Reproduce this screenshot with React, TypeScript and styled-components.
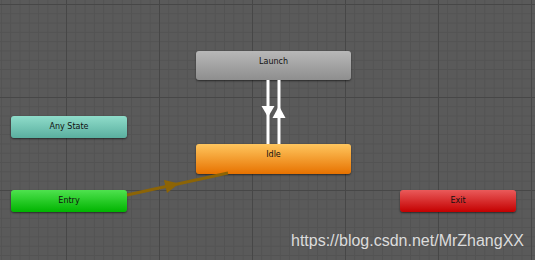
import styled, { createGlobalStyle, css } from "styled-components";

const GlobalStyle = createGlobalStyle`
  html, body {
    margin: 0;
    padding: 0;
    background: #585858;
  }
`;

type Kind = "plain" | "default" | "any" | "entry" | "exit";

const kinds = {
  plain: css`
    background: linear-gradient(#b8b8b8, #8e8e8e);
  `,
  default: css`
    background: linear-gradient(#ffc65e, #e77200);
  `,
  any: css`
    background: linear-gradient(#8fdcca, #5aaf9f);
  `,
  entry: css`
    background: linear-gradient(#4ee24e, #00b400);
  `,
  exit: css`
    background: linear-gradient(#ea5a5a, #c40000);
  `,
};

const Canvas = styled.div`
  position: relative;
  width: 535px;
  height: 260px;
  overflow: hidden;
  background-color: #5a5a5a;
  background-image:
    linear-gradient(90deg, #474747 1px, transparent 1px),
    linear-gradient(#474747 1px, transparent 1px),
    linear-gradient(90deg, #535353 1px, transparent 1px),
    linear-gradient(#535353 1px, transparent 1px);
  background-size: 93px 93px, 93px 93px, 9.3px 9.3px, 9.3px 9.3px;
  background-position: 66px 4px, 66px 4px, 66px 4px, 66px 4px;
  font-family: "DejaVu Sans", Verdana, sans-serif;
`;

const StateNode = styled.div<{ $kind: Kind; $x: number; $y: number; $w: number; $h: number }>`
  position: absolute;
  left: ${(p) => p.$x}px;
  top: ${(p) => p.$y}px;
  width: ${(p) => p.$w}px;
  height: ${(p) => p.$h}px;
  box-sizing: border-box;
  border-radius: 3px;
  box-shadow: 0 1px 2px rgba(0, 0, 0, 0.55);
  color: #111;
  font-size: 8px;
  line-height: 22px;
  text-align: center;
  ${(p) => kinds[p.$kind]}
`;

const Links = styled.svg`
  position: absolute;
  left: 0;
  top: 0;
  pointer-events: none;
`;

const Watermark = styled.div`
  position: absolute;
  right: 11px;
  bottom: 10px;
  color: #dcdcdc;
  font-family: "Liberation Sans", Arial, sans-serif;
  font-size: 16px;
`;

const states: { name: string; kind: Kind; x: number; y: number; w: number; h: number }[] = [
  { name: "Launch", kind: "plain", x: 196, y: 51, w: 155, h: 29 },
  { name: "Idle", kind: "default", x: 196, y: 144, w: 155, h: 30 },
  { name: "Any State", kind: "any", x: 11, y: 116, w: 116, h: 22 },
  { name: "Entry", kind: "entry", x: 11, y: 190, w: 116, h: 22 },
  { name: "Exit", kind: "exit", x: 400, y: 190, w: 116, h: 22 },
];

export default function App() {
  return (
    <>
      <GlobalStyle />
      <Canvas>
        {states.map((s) => (
          <StateNode key={s.name} $kind={s.kind} $x={s.x} $y={s.y} $w={s.w} $h={s.h}>
            {s.name}
          </StateNode>
        ))}
        <Links width="535" height="260">
          {/* Launch <-> Idle */}
          <line x1="268" y1="80" x2="268" y2="144" stroke="#fff" strokeWidth="3" />
          <polygon points="261.5,106 274.5,106 268,117" fill="#fff" />
          <line x1="279" y1="80" x2="279" y2="144" stroke="#fff" strokeWidth="3" />
          <polygon points="279,106 285.5,118 272.5,118" fill="#fff" />
          {/* Entry -> Idle */}
          <line x1="127" y1="195" x2="228" y2="173" stroke="#8c6406" strokeWidth="3" />
          <polygon points="179,183.5 164,180 167,193" fill="#8c6406" />
        </Links>
        <Watermark>https://blog.csdn.net/MrZhangXX</Watermark>
      </Canvas>
    </>
  );
}
